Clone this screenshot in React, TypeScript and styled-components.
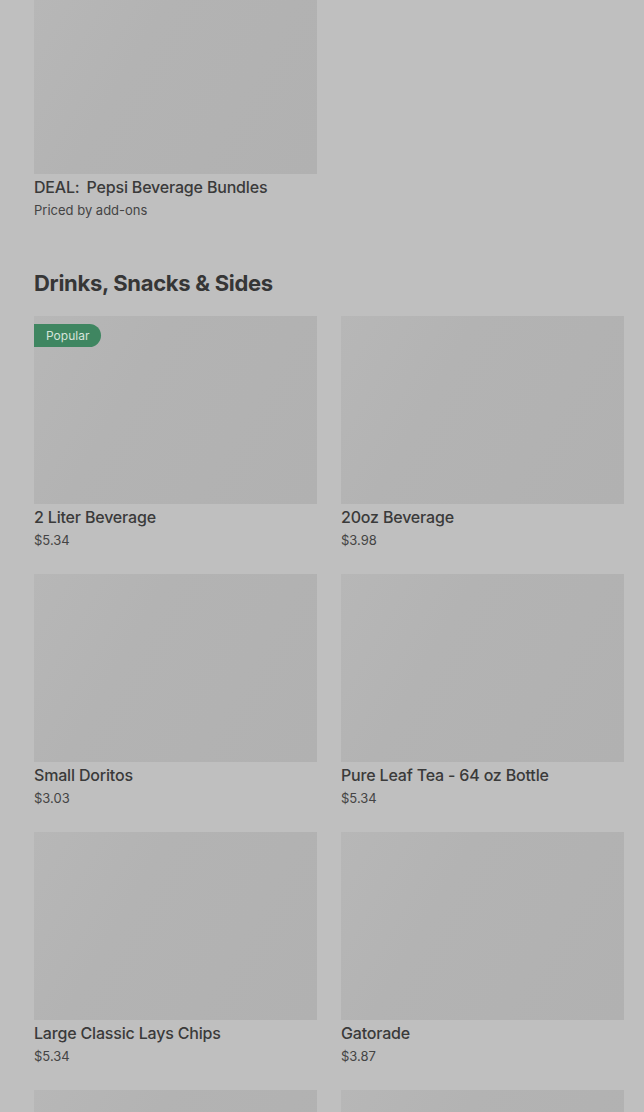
import React from 'react'
import styled, { createGlobalStyle } from 'styled-components'

const GlobalStyle = createGlobalStyle`
  html, body {
    margin: 0;
    padding: 0;
    background: #bfbfbf;
    overflow: hidden;
  }
  body {
    font-family: Inter, Roboto, "Liberation Sans", sans-serif;
    color: #383838;
  }
`

const Page = styled.div`
  padding: 0 20px 0 34px;
  height: 1112px;
  overflow: hidden;
`

const Section = styled.section`
  display: flex;
  flex-direction: column;
`

const Heading = styled.h2`
  margin: 50px 0 19px;
  font-family: Inter, "Noto Sans", sans-serif;
  font-size: 22px;
  line-height: 28px;
  font-weight: 700;
  letter-spacing: -0.3px;
  color: #363636;
`

const Grid = styled.div`
  display: grid;
  grid-template-columns: 1fr 1fr;
  column-gap: 24px;
  row-gap: 25px;
`

const Card = styled.div<{ $half?: boolean }>`
  display: flex;
  flex-direction: column;
  width: ${({ $half }) => ($half ? 'calc(50% - 12px)' : 'auto')};
`

const Photo = styled.div<{ $h: number }>`
  position: relative;
  height: ${({ $h }) => $h}px;
  background: linear-gradient(120deg, #b7b7b7 0%, #b3b3b3 35%, #b1b1b1 100%);
`

const Badge = styled.span`
  position: absolute;
  top: 8px;
  left: 0;
  height: 23px;
  padding: 0 12px;
  display: flex;
  align-items: center;
  border-radius: 0 12px 12px 0;
  background: #3f8661;
  color: #d6e4db;
  font-size: 12px;
`

const Title = styled.div`
  margin-top: 2px;
  font-size: 16px;
  line-height: 22px;
  font-weight: 500;
  letter-spacing: -0.18px;
  color: #3a3a3a;
`

const Deal = styled.span`
  margin-right: 7px;
`

const Price = styled.div`
  margin-top: 3px;
  font-size: 13px;
  line-height: 18px;
  color: #444;
`

const items = [
  { name: '2 Liter Beverage', price: '$5.34', popular: true },
  { name: '20oz Beverage', price: '$3.98' },
  { name: 'Small Doritos', price: '$3.03' },
  { name: 'Pure Leaf Tea - 64 oz Bottle', price: '$5.34' },
  { name: 'Large Classic Lays Chips', price: '$5.34' },
  { name: 'Gatorade', price: '$3.87' },
]

export default function App() {
  return (
    <Page>
      <GlobalStyle />
      <Section>
        <Card $half>
          <Photo $h={174} />
          <Title>
            <Deal>DEAL:</Deal>Pepsi Beverage Bundles
          </Title>
          <Price>Priced by add-ons</Price>
        </Card>
      </Section>
      <Section>
        <Heading>Drinks, Snacks &amp; Sides</Heading>
        <Grid>
          {items.map((it) => (
            <Card key={it.name}>
              <Photo $h={188}>{it.popular && <Badge>Popular</Badge>}</Photo>
              <Title>{it.name}</Title>
              <Price>{it.price}</Price>
            </Card>
          ))}
          <Card>
            <Photo $h={188} />
          </Card>
          <Card>
            <Photo $h={188} />
          </Card>
        </Grid>
      </Section>
    </Page>
  )
}
